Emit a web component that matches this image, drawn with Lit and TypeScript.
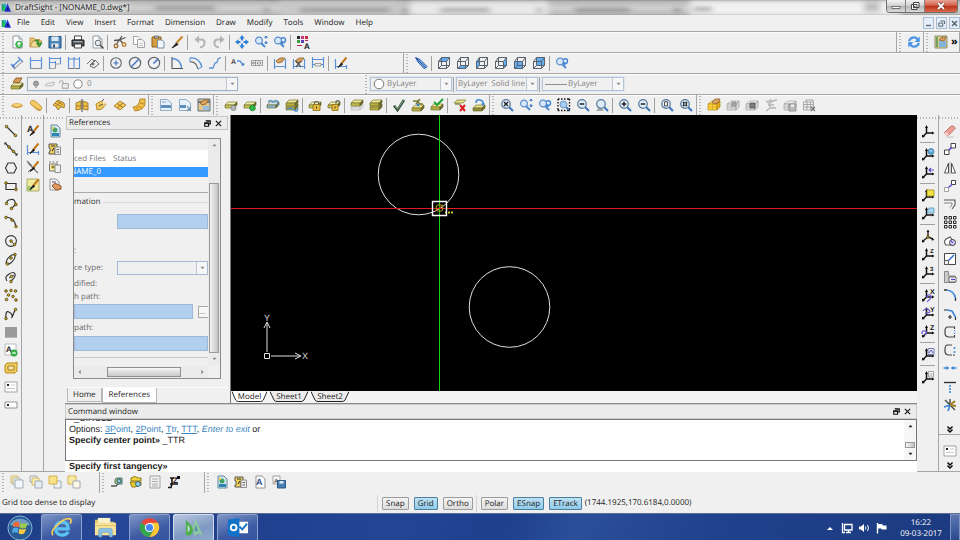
import { LitElement, html, svg, css, nothing } from "lit";
import { customElement, property } from "lit/decorators.js";
import { classMap } from "lit/directives/class-map.js";

/* A mark is a path [d, stroke, fill, width] or a short text {t, x, y, c, s}. */
type PathMark = [string, string?, string?, number?];
type TextMark = { t: string; x: number; y: number; c: string; s: number };
type Mark = PathMark | TextMark;

const dot = (x: number, y: number, r: number) =>
  `M${x - r} ${y}a${r} ${r} 0 1 0 ${2 * r} 0a${r} ${r} 0 1 0 ${-2 * r} 0Z`;
const box = (x: number, y: number, w: number, h: number) => `M${x} ${y}h${w}v${h}h${-w}Z`;
const node = (x: number, y: number): PathMark => [dot(x, y, 1.3), "#4a3c08", "#d8b030", 0.8];
const txt = (t: string, x: number, y: number, c = "#111", s = 7): TextMark => ({ t, x, y, c, s });

const BLUE = "#5b8fd8";
const GREY = "#9a9a9a";

const slab = (top: string, side: string, dy = 0): Mark[] => [
  [`M1 ${7 + dy}L4 ${4 + dy}H13L10 ${7 + dy}Z`, "#77742f", top, 0.7],
  [`M1 ${7 + dy}H10V${10 + dy}H1Z`, "#77742f", side, 0.7],
  [`M10 ${7 + dy}L13 ${4 + dy}V${7 + dy}L10 ${10 + dy}Z`, "#66642a", "#6f6c33", 0.7],
];
const layer = [...slab("#f2eeb0", "#c9c155")];
const layers2: Mark[] = [...slab("#f0eaa0", "#b7ae3e", 2), ...slab("#f0eaa0", "#b7ae3e", -2)];
const lens: Mark[] = [
  ["M9 9L13 13", "#3f78bd", "none", 2.2],
  [dot(6, 6, 4.3), "#5b7898", "#dcebf8", 1.2],
];
const smallLens: Mark[] = [
  ["M7 8L11 12", "#4f88cd", "none", 2],
  [dot(5, 5.5, 3.4), "#5d8fcb", "#d7e8fa", 1.2],
];
const cube = (face: string): Mark[] => [
  [face, "none", "#62aef2"],
  ["M1.5 5.5H9.5V12.5H1.5ZM1.5 5.5L4.5 1.5H12.5L9.5 5.5M12.5 1.5V9.5L9.5 12.5M4.5 1.5V9.5H12.5M4.5 9.5L1.5 12.5", "#59626c", "none", 1],
];
const solid = (c1: string, c2: string): Mark[] => [
  ["M1 6L5 3H13L10 6Z", "#9a9a9a", c1, 0.6],
  ["M1 6H10V12H1Z", "#9a9a9a", c2, 0.6],
  ["M10 6L13 3V9L10 12Z", "#8a8a8a", c2, 0.6],
  ["M5.5 6V12M1 9H10", "#aaa", "none", 0.6],
];
const axes: Mark[] = [
  ["M5.5 3V9H12M5.5 9L2 12.5", "#111", "none", 1.5],
  ["M4 4L5.5 1L7 4ZM11 7.5L13.5 9L11 10.5ZM1 10.5L1 13.5L4 13Z", "none", "#111"],
];
const doc: Mark[] = [
  ["M3 1H9L12 4V13H3Z", "#8b949c", "#fbfcfd", 0.9],
  ["M9 1V4H12", "#8b949c", "#e3e8ec", 0.9],
];
const brush: Mark[] = [
  ["M12.5 1.5L7 8", "#c07818", "none", 2],
  ["M7.5 7L4 11.5L8.5 8.5Z", "#222", "#222", 1],
];
const gold = "#f3c964";
const goldEdge = "#b98322";
const dims: PathMark = ["M1.5 3V13M12.5 3V13M1.5 10.5H12.5", BLUE, "none", 1.2];
const pencilHand: PathMark = ["M3 5L7 2H12L9 6L5 7Z", "#8a5a24", "#d9a360", 0.8];
const sheetSmall: PathMark = ["M7 5H12.5V12.5H7Z", "#777", "#f0f0f0", 0.8];

const ICONS: Record<string, Mark[]> = {
  new: [...doc, [dot(9, 9.5, 3.3), "#2b9a3a", "#4fc15c", 0.8], ["M9 11.5V7.8M7.5 9.2L9 7.5L10.5 9.2", "#fff", "none", 1.1]],
  open: [["M1 12V3H5L6 4.5H11V6H4Z", "#b68b3a", "#e9c67a", 0.8], ["M1 12L4 6H13L10 12Z", "#b68b3a", "#f5dc9c", 0.8], ["M6 6Q9 4 10 9M7.5 8L10.5 11L12.5 7.5", "#3b8f34", "none", 1.8]],
  save: [["M1 1.5H13V13H1Z", "#1f4f80", "#4e87bb", 1], [box(3.5, 1.5, 7, 4.5), "none", "#dbe9f5"], [box(3.5, 8.5, 7, 4), "none", "#e9e9e9"], [box(5, 9.5, 2, 3), "none", "#2b4f77"]],
  print: [[box(3.5, 1, 7, 4), "#333", "#fff", 0.9], ["M1 5H13V11H1Z", "#222", "#4a4f55", 1], [box(3.5, 9, 7, 4), "#333", "#f4f4f4", 0.9], [box(2.5, 6.3, 9, 1), "none", "#c9d0d6"]],
  preview: [...doc, ["M10 10L13.5 13.5", "#444", "none", 1.6], [dot(8, 8, 2.8), "#666", "#e2eef7", 1]],
  cut: [["M1 5.5L6 5L12.5 2.5M3.5 9L9 1M7 5L10 8.5", "#555", "none", 1.3], [dot(3, 11, 1.8), "#9a6a28", "none", 1.3], [dot(11, 9.5, 1.8), "#b87a28", "none", 1.3]],
  copy: [["M1.5 1.5H6L8.5 4V9.5H1.5Z", GREY, "#fff", 0.9], ["M5.5 4.5H10L12.5 7V12.5H5.5Z", GREY, "#f6f6f6", 0.9], ["M7 8.5H11M7 10.5H11", "#bbb", "none", 0.8]],
  paste: [["M1 2H10V12H1Z", "#8a5f20", "#d69c42", 1], [box(3.5, 1, 4, 2.2), "#555", "#bbb", 0.7], ["M6.5 5H11L13 7V13H6.5Z", "#6b86a0", "#f3f7fb", 0.9]],
  painter: [["M12.5 1.5L6 8.5", "#c98a34", "none", 2.2], ["M6.5 8L2 13L8 9.5Z", "#222", "#222", 1]],
  undo: [["M3 4.5H8Q12 4.5 11.5 8.5Q11 12 7 12.5", "#b3b3b3", "none", 2], ["M6 0.5L1.5 4.5L6 8.5Z", "none", "#b3b3b3"]],
  redo: [["M11 4.5H6Q2 4.5 2.5 8.5Q3 12 7 12.5", "#b3b3b3", "none", 2], ["M8 0.5L12.5 4.5L8 8.5Z", "none", "#b3b3b3"]],
  pan: [["M7 0L9.7 3.6H4.3ZM7 14L9.7 10.4H4.3ZM0 7L3.6 4.3V9.7ZM14 7L10.4 4.3V9.7Z", "none", "#2f7fd6"], ["M7 3V5.5M7 8.5V11M3 7H5.5M8.5 7H11", "#2f7fd6", "none", 2]],
  zoomdyn: [...smallLens, ["M12 1V3.5M10.6 2.8L12 1L13.4 2.8M12 9V6M10.6 7L12 9L13.4 7", "#2f6fc6", "none", 1]],
  zoomprev: [...smallLens, ["M8 3.5Q12.5 1.5 12.5 5Q12.5 8 9 7.5", "#3d83d4", "none", 1.5], ["M10 5.5L7.5 7.5L10.5 9.5Z", "none", "#3d83d4"]],
  props: [[box(1, 1, 3, 3), "none", "#2b2b2b"], [box(5, 1, 3, 3), "none", "#c63a7b"], [box(9, 1, 3, 3), "none", "#d6283c"], [box(1, 5, 3, 3), "none", "#36a24a"], [box(5, 5, 3, 3), "none", "#5a3fb2"], ["M1 10.5H6M9 5.5H12", "#b3235a", "none", 1.2], txt("A", 8, 14, "#111", 8)],

  dimAligned: [["M1 8L5 13M8 1L13 6M3.5 9.5L10 3.5", BLUE, "none", 1.3], ["M3 11L4.5 12.5L13 5", "#777", "none", 0.9], ["M2 11L3 8L5 10.5Z", "none", "#3f75c4"]],
  dimLinear: [["M1.5 1V13M12.5 1V13M1.5 4.5H12.5", BLUE, "none", 1.2], ["M1.5 12.5H12.5", "#8b8b8b", "none", 1]],
  dimBase: [["M1.5 1V13M12.5 1V8M7.5 5V12M1.5 2.5H12.5M1.5 6.5H7.5", BLUE, "none", 1.1], ["M2 12.5H7.5V8H12.5", "#999", "none", 0.9]],
  dimCont: [["M1.5 1V13M12.5 1V13M7 1V13M1.5 3H12.5", BLUE, "none", 1.1], ["M1.5 12.5H7M8 12.5H12.5", "#777", "none", 1]],
  dimRot: [["M1 8L6 3L9 6M4 9L8 5", "#777", "none", 1], ["M4 10L9 4L13 8L8 12Z", "#666", "none", 1], [dot(7, 8, 1), "#555", "none", 1]],
  center: [[dot(7, 7, 5.3), "#5d6670", "none", 1.1], ["M4.5 7H9.5M7 4.5V9.5", "#3d72c9", "none", 1.2]],
  diameter: [[dot(7, 7, 5.6), "#5d6670", "none", 1.2], ["M3.5 10.5L10.5 3.5", "#3d72c9", "none", 1.5]],
  radius: [[dot(7, 7, 5.6), "#5d6670", "none", 1.2], ["M6.5 7.5L10.8 3.2", "#3d72c9", "none", 1.6]],
  angle: [["M2 1V12.5H13", "#555", "none", 1.1], ["M2 2.5Q11 3 11.5 12", BLUE, "none", 1.3]],
  arcLen: [["M1 6Q7 5 9 13", "#666", "none", 1.1], ["M1 2Q10 1 13 11", BLUE, "none", 1.4], ["M1 2L1 6M13 11L9 13", BLUE, "none", 1]],
  jog: [["M1 12H5L7 7L9 6.5L10 3L13 1.5", BLUE, "none", 1.3]],
  leader: [txt("A", 0, 8, "#444", 7), ["M6 5H9L12 9", BLUE, "none", 1.3], ["M10 9.5H13.2V6.5Z", "none", "#3f75c4"]],
  tol: [["M1.5 4.5H12.5V9.5H1.5ZM5.5 4.5V9.5M9 4.5V9.5", "#888", "#fff", 0.8], [dot(3.5, 7, 1), "#555", "none", 0.7], ["M7.3 5.8V8.4M10.8 5.8V8.4", "#555", "none", 0.8]],
  dimEdit: [dims, pencilHand],
  dimEditX: [dims, pencilHand, ["M4 5L9 11M9 5L4 11", "#555", "none", 1.2]],
  dimSpace: [["M1.5 1V12M12.5 1V12M1.5 3.5H12.5M1.5 8.5H12.5", BLUE, "none", 1.1], ["M4 7.5H10V10H4Z", "#888", "#eee", 0.8]],
  dimStyle: [["M1.5 3V13M1.5 10.5H12.5M12.5 9V13", BLUE, "none", 1.2], ...brush],

  ray: [["M1.5 1.5L4 6L10.5 13L13 10.5L6 3.5Z", "#2a5cab", "#7fb0ec", 1], ["M2 2L12 12", "#17407f", "none", 0.8]],
  cubeTop: cube("M1.5 5.5L4.5 1.5H12.5L9.5 5.5Z"),
  cubeBottom: cube("M1.5 12.5L4.5 9.5H12.5L9.5 12.5Z"),
  cubeLeft: cube("M1.5 5.5L4.5 1.5V9.5L1.5 12.5Z"),
  cubeRight: cube("M9.5 5.5L12.5 1.5V9.5L9.5 12.5Z"),
  cubeFront: cube("M1.5 5.5H9.5V12.5H1.5Z"),
  cubeBack: cube("M4.5 1.5H12.5V9.5H4.5Z"),

  layerMgr: [...slab("#f2eeb0", "#b9b14b", 2), ["M3 5L6 1H12L9 6Z", "#7d5520", "#d39a58", 0.8]],
  disc: [["M1 7.5Q7 3 13 7.5Q7 12 1 7.5Z", "#d9a850", "#f6cf7a", 0.7], ["M2 8Q7 11 12 8", goldEdge, "none", 0.8]],
  plate: [["M1 5Q2 1 6 3L12 8Q14 11 11 12.5Q9 13 6 10Z", goldEdge, gold, 0.7], ["M1.5 6Q8 12 12 12", "#c99038", "none", 1]],
  fold: [["M1 7L6 2L12 5Q13 7 12 10Q9 7 6 12Q5 8 1 7Z", "#8a6415", "#efbf4c", 0.8], ["M3 5L10 9M5 3L11 7M9 4L4 8", "#8a6415", "none", 0.6]],
  meshBox: [["M1 5L6 3V11L1 12ZM8 3L13 5V12L8 11Z", "#8f6a1a", "#efc04e", 0.8], ["M7 1V14", "#444", "none", 1], ["M1 8H6M8 8H13", "#8f6a1a", "none", 0.7]],
  meshDot: [["M2 6L7 3L12 6L8 11L3 12Z", "#a87c1c", "#f1c75c", 0.8], ["M8 3L10 1M5 8L9 6", "#555", "none", 1], [dot(10, 5, 1.5), "none", "#f9e6b0"]],
  meshTilt: [["M1 8L7 3L13 7L7 12Z", "#9a7018", "#f4c85a", 0.8], ["M4 5.5L10 9.5M4 10L10 5", "#8a6415", "none", 0.8]],
  tube: [["M8 1H13V6Q12 12 3 13L1 9Q7 9 8 1Z", "#b27f1c", "#f2c04a", 0.9], ["M8 5L12 6M6 8L10 10M4 9L6 12", "#a67416", "none", 0.8]],
  sheet1: [["M1.5 1.5H8L12.5 5V12.5H1.5Z", "#8ba5bd", "#e6f0f8", 0.9], ["M2 7H12V10H2Z", "none", "#5e8fbe"], ["M3 4H7", "#7ea2c4", "none", 1]],
  sheet2: [["M1.5 1.5H8L12.5 5V12.5H1.5Z", "#8ba5bd", "#e6f0f8", 0.9], ["M2 7H8V10H2Z", "none", "#5e8fbe"], ["M9 8L13 13M9 13L13 9", "#6c8ca8", "none", 1.2]],
  sheet3: [[box(1, 1, 12, 12), "#5d7080", "#e3c88c", 1], ["M1 4H13", "#4d6a86", "none", 1.6], pencilHand, [box(6, 8, 6, 4), "none", "#9dbde0"]],
  layGrey: [...layer, [dot(9.5, 10, 2.6), "#888", "#b4b4b4", 0.8]],
  layGreen: [...layer, [dot(9.5, 10, 2.8), "#128026", "#2eb845", 0.8]],
  layFreeze: [...slab("#cfe4f4", "#88b5d6"), ["M2 4Q5 1 7 4Q10 1 12 4V8", "#5c93bf", "none", 1.4]],
  layThaw: [...layers2, ["M2 11Q6 9 9 12T13 10", "#4d93c8", "none", 1.6]],
  layLock: [...layer, [box(5, 6.5, 7, 6), "#8a6a15", "#e8bd3c", 0.8], ["M6.5 6.5V4.5Q8.5 2.5 10.5 4.5V6.5", "#666", "none", 1.1], [box(8, 8.5, 1, 2), "none", "#333"]],
  layUnlock: [...layer, [box(5, 6.5, 6, 6), "#8a6a15", "#e8bd3c", 0.8], ["M9 6V3.5Q11 1.5 13 4", "#666", "none", 1.1], [box(7.5, 8.5, 1, 2), "none", "#333"]],
  layIso: [["M1 9H10V12H1ZM10 9L13 6V9L10 12", "#b4b4b4", "#e2e2e2", 0.7], ...slab("#efe99a", "#c0b846", -2)],
  layAll: layers2,
  check: [["M2 7.5L5.5 12L12 2", "#35523c", "none", 2.6], ["M2.5 7.5L5.5 11L11.5 2.5", "#86a98d", "none", 1]],
  layWalk: [...slab("#efe99a", "#b7ae3e", 3), ["M2 3H6L9 6H12M9 1L5 6", "#7c7735", "none", 1.6], [dot(7, 7, 1.4), "none", "#3f86d0"]],
  layCheck: [...slab("#efe99a", "#b7ae3e", 2), ["M4 4L7 7L13 1", "#19a52f", "none", 1.9]],
  layDel: [["M1 5L4 2H13L10 5Z", "#77742f", "#e9e28a", 0.7], ["M2 6H7", "#77742f", "none", 1.2], ["M7 7L12 13M12 7L7 13", "#d81e1e", "none", 2]],
  layPrev: [...slab("#e9e28a", "#8f8838", 3), ["M4 5Q4 1 8 2T11 6", "#3f86d0", "none", 1.6], ["M9 5.5H13L11 8Z", "none", "#3f86d0"]],
  zoomX: [...lens, ["M4 4L8 8M8 4L4 8", "#222", "none", 1.4]],
  zoomWin: [["M1 1H2.5M4 1H5.5M7 1H8.5M10 1H12.5M12.5 1V2.5M12.5 4V5.5M12.5 7V8.5M12.5 10V12.5M1 1V2.5M1 4V5.5M1 7V8.5M1 10V12.5M1 12.5H2.5M4 12.5H5.5M7 12.5H8.5M10 12.5H12.5", "#111", "none", 1.4], ["M8.5 8.5L12 12", "#3f78bd", "none", 2], [dot(6.5, 6.5, 3.5), "#6c98c8", "#a9cdf0", 1]],
  zoomMinus: [...lens, ["M3.8 6H8.2", "#222", "none", 1.5]],
  zoomPlus: [...lens, ["M3.8 6H8.2M6 3.8V8.2", "#222", "none", 1.5]],
  zoomCen: [["M1 13L5 8L9 13Z", "none", "#a8a8a8"], ...lens],
  zoomDoc: [...lens, ["M4.6 3.8H7.4V8H4.6Z", "#333", "#fff", 0.9]],
  zoomFit: [...lens, ["M4 4H5.4V5.4H4ZM6.6 4H8V5.4H6.6ZM4 6.6H5.4V8H4ZM6.6 6.6H8V8H6.6Z", "#111", "#111", 0.4]],
  blockGold: [["M1 6L5 3H13L10 6Z", "#b58a14", "#ffe57a", 0.7], ["M1 6H10V12H1Z", "#b58a14", "#ffd23e", 0.7], ["M10 6L13 3V9L10 12Z", "#a57a10", "#e8ae20", 0.7], ["M5.5 6V12M1 9H10", "#c89c28", "none", 0.6], ["M5 4L8 1H13L11 5L7 6Z", "#875820", "#dca468", 0.7]],
  blockA: [...solid("#eee", "#dadada"), ["M6 4H10V8H6Z", "#888", "#a6a6a6", 0.8]],
  blockB: [...solid("#eee", "#dadada"), ["M5 5H10V10H5Z", "#555", "#7c7c7c", 0.8]],
  blockC: [["M2 4L13 2M6 1V10L2 13M6 10H12M4 7H10", "#b4b4b4", "none", 1.3], ["M2 2L5 6L10 3", "#c4c4c4", "none", 1.2]],
  blockSave: [...solid("#ececec", "#dcdcdc"), [box(6, 6, 7, 7), "#8d8d8d", "#b9b9b9", 0.9], [box(8, 6.5, 3, 2.4), "none", "#f0f0f0"]],
  blockTab: [["M1.5 4H11.5V12H1.5ZM1.5 6.5H11.5M1.5 9H11.5M5 4V12M8.5 4V12", "#999", "#eee", 0.8], ["M4 4V2H11V4", "#999", "none", 0.9], ["M9 9L13 13M13 9L9 13", "#777", "none", 1.2]],
  refresh: [["M2 6Q4 1.5 8.5 2.5L11 4.5M12 8Q10 12.5 5.5 11.5L3 9.5", "#4d97e6", "none", 2.3], ["M12.8 1.5V7H7.5ZM1.2 12.5V7H6.5Z", "none", "#4d97e6"]],
  palette: [[box(1, 1, 12, 12), "#8d8f70", "#d8cf8b", 1], [box(5, 6, 7, 6), "none", "#86b3dc"], ["M5 5L8 2H12L10 6Z", "#8a5a24", "#d59a62", 0.7], ["M3 2V12", "#4e8a4c", "none", 1.4]],

  line: [["M3 3L11 11", "#333", "none", 1.1], node(2.5, 2.5), node(11.5, 11.5)],
  iline: [["M1 1L13 13", "#333", "none", 1.1], node(5, 5), node(9.5, 9.5), ["M0.5 0.5H3L0.5 3ZM13.5 13.5H11L13.5 11Z", "none", "#222"]],
  polygon: [["M4 2H10L12.5 7L10 12H4L1.5 7Z", "#333", "none", 1.1]],
  rect: [["M2 4.5H12V10.5H2Z", "#333", "none", 1.2], node(2, 4), node(12, 10.5)],
  arc3: [["M3 7Q2 3 7 2.5T11 8L7 12", "#333", "none", 1.2], node(2.5, 6.5), node(12, 7.5), node(7.5, 11.5)],
  arc: [["M2 2Q11 3 12 12", "#333", "none", 1.2], node(2, 2.5), node(8, 5), node(12, 11.5)],
  circle: [[dot(7, 7, 5.4), "#333", "none", 1.1], ["M7 7L10 10", "#333", "none", 0.8], node(7, 7), node(10.5, 10.5)],
  ellipse: [["M2 11Q3 4 11 2Q12 8 5 12Z", "#333", "none", 1.1], node(7, 6), node(11, 2.5), node(3.5, 12)],
  ellArc: [["M3 11Q0 7 5 4T11 4T7 11", "#333", "none", 1.2], ["M5 8L10 5", "#333", "none", 0.9], node(7.5, 6.5), node(7, 11.5)],
  points: [node(2, 3), node(7, 2.5), node(4.5, 7), node(11.5, 3), node(9, 8.5), node(2.5, 11.5), node(12, 12)],
  spline: [["M2 12Q1 3 5 5T8 10T11 3", "#333", "none", 1.2], node(2, 11.5), node(11.5, 2.5)],
  hatch: [[box(1, 2, 12, 11), "none", "#dcdcdc"], ["M1 3H13M1 5H13M1 7H13M1 9H13M1 11H13M2 2V13M4 2V13M6 2V13M8 2V13M10 2V13M12 2V13", "#777", "none", 0.8]],
  note: [[box(1, 1, 11, 11), "#aaa", "#fff", 0.8], txt("A", 2, 9, "#222", 8), [dot(10, 10, 3.2), "#1d8a30", "#38b54c", 0.6], ["M8.3 10H11.7", "#fff", "none", 1.3]],
  cloud: [["M3 2H11L13 1V10L11 12H2L1 11V4Z", "#b68a22", "#f0cc58", 1], [box(4, 5, 6, 4), "#8a6a1a", "#f7e5a8", 0.8]],
  tableA: [[box(1, 2, 12, 10), "#9a9a9a", "#fff", 0.9], [box(3, 4, 2, 2), "none", "#222"], ["M3 8.5H11M7 5H11", "#bbb", "none", 0.8]],
  tableB: [[box(1, 4, 12, 6), "#888", "#fff", 0.9], [box(3, 6, 2, 2), "none", "#222"]],
  textStyle: [txt("A", 1, 8, "#222", 9), ...brush],
  lineStyle: [["M2 3L12 13M1 1L6 6", "#777", "none", 1.2], ["M2 12L5 9", "#777", "none", 1], ...brush],
  fillStyle: [[box(1, 1, 12, 12), "#9a9a55", "#f0e9a0", 0.8], [box(1, 8, 5, 5), "none", "#a7c66c"], ...brush],
  refDoc: [["M3 1H9L12 4V13H3Z", "#568090", "#d6eaf2", 0.9], [dot(7, 6, 2.5), "none", "#46a06a"], [box(4, 9, 7, 3), "none", "#2e84b4"], [box(4, 3, 2, 2), "none", "#e8c640"]],
  refBlock: [["M1 2H9V6H7V12H1V10H2V6H1Z", "#555", "#f3d35a", 1], ["M3 4H7M4 9L6 6", "#333", "none", 1.1], sheetSmall, ["M8.5 7.5H11M8.5 10H11", "#444", "none", 0.9]],
  refDash: [[box(1.5, 4, 8, 7), "#777", "#f4eaa0", 1], ["M1 2H3M4.5 2H6.5M8 2H10", "#777", "none", 1], sheetSmall, [dot(5, 7, 1.6), "none", "#8a7b20"]],
  refHand: [["M2 1H8L11 4V12H2Z", "#888", "#f4f4f4", 0.9], ["M4 8Q6 4 9 6L13 8V11L8 12Z", "#8a4c1c", "#e09a60", 0.9], ["M4 4H8", "#557", "none", 1]],

  ucs: axes,
  ucsWorld: [...axes, [dot(10, 4.5, 2.9), "#2d6a9a", "#5aa7dc", 0.7], ["M8.5 3.5Q10 5 11.5 3.5", "#d6ecfa", "none", 0.9]],
  ucsPrev: [...axes, ["M8 5H13M10 3L8 5L10 7", "#5a4fd0", "none", 1.2]],
  ucsFace: [...axes, ["M6 2H13V8H6Z", "#9c8a14", "#f6e34a", 0.8]],
  ucsView: [...axes, ["M8 2H13V7H6Z", "#5c96b8", "#a9d8f0", 0.8]],
  ucsOrigin: [["M7 3V8L12 10M7 8L2 12", "#222", "none", 1.4], ["M5.5 3L7 0.5L8.5 3ZM11 9L13.5 11L10.5 11.5ZM1 10.5V13.5L4 13Z", "none", "#111"], node(7, 8)],
  ucsZ: [...axes, txt("Z", 9, 6, "#111", 6)],
  ucs3: [...axes, txt("3", 9, 6, "#111", 6)],
  rotX: [...axes, txt("X", 9, 6, "#111", 7), ["M6 10Q6 6 9 7T8 12T10 10", "#6a5fd8", "none", 1.2]],
  rotY: [...axes, txt("Y", 9, 6, "#111", 7), ["M2 5Q5 1 8 4T4 7", "#6a5fd8", "none", 1.2]],
  rotZ: [...axes, txt("Z", 9, 6, "#111", 7), ["M1 10Q1 6 4 7T4 11", "#6a5fd8", "none", 1.3]],
  ucsNamed: [...axes, [box(7, 1.5, 6, 6), "#6a70b0", "#e6e8fa", 0.9], ["M8 6L10 3L12 6", "#4a50a0", "none", 0.9]],
  ucsApply: [...axes, [box(7.5, 1.5, 5, 5.5), "#999", "#fff", 0.9], [box(9, 3.5, 2, 2), "#aaa", "none", 0.7]],

  erase: [["M1 9L8 2Q10 1 12.5 4L6 11Q3 12 1 9Z", "#b06a60", "#ee9d94", 0.8], ["M1 9Q2 12 6 11L4 8Z", "none", "#f8d0cc"], ["M3 13H11", "#b8b8b8", "none", 0.8]],
  move: [[box(8, 1.5, 4.5, 4.5), "#444", "#fff", 1], [box(1.5, 8, 4.5, 4.5), "#444", "#fff", 1], ["M6 8L8.5 5.5", "#4a3fd8", "none", 1.6]],
  mirror: [["M5.5 2V12H1.5ZM8.5 2V12H12.5Z", "#555", "#fff", 1], ["M7 0.5V13.5", "#888", "none", 0.6]],
  copyEnt: [[box(8.5, 1.5, 4, 4), "#444", "#fff", 1], [box(1.5, 8.5, 4, 4), "#999", "#fff", 0.9], ["M5.5 8.5L9 5.5", "#5a4fe0", "none", 1.6]],
  offset: [["M1 3H12V8L9 12", "#555", "none", 1.1], ["M1 6H9V8L7 10.5", "#888", "none", 1]],
  pattern: [["M1.5 1.5H4V4H1.5ZM6 1.5H8.5V4H6ZM10.5 1.5H13V4H10.5ZM1.5 6H4V8.5H1.5ZM6 6H8.5V8.5H6ZM10.5 6H13V8.5H10.5ZM1.5 10.5H4V13H1.5ZM6 10.5H8.5V13H6ZM10.5 10.5H13V13H10.5Z", "#222", "#fff", 1]],
  rotate: [["M3 5L7 3L11 8L8 11H3Q0 8 3 5Z", "#555", "#fff", 1.1], [dot(9.5, 8.5, 3), "#333", "#dcd8f8", 1], ["M8 7L10 9", "#5a4fe0", "none", 1.3]],
  scale: [[box(1.5, 1.5, 11, 11), "#444", "#fff", 1], ["M4 10L11 3", "#2f6fd6", "none", 1.4], [box(1.5, 8.5, 4, 4), "#555", "#eee", 0.9]],
  stretch: [["M1.5 1.5H5.5V6H12V12.5H1.5Z", "#888", "#ccc", 1], [box(6, 7, 7, 5), "#555", "#fff", 0.9], ["M8 9.5H12", "#4a3fd8", "none", 1.3]],
  fillet: [["M1 2H4M12.5 10V13", "#333", "none", 1.3], ["M4 2Q11 3 12.5 10", "#3b86dd", "none", 1.6]],
  chamfer: [["M1 3H4M12.5 10V13M5 10H9M7 8V12", "#333", "none", 1.2], ["M4 3L9 4L12.5 10", "#3b86dd", "none", 1.5]],
  split: [["M11.5 4V2H5Q2 2 2 6V8Q2 12 6 12H11.5V10", "#444", "none", 1.2], ["M11.5 5.5V6.5M11.5 8V9", "#3b86dd", "none", 1.4]],
  splitP: [["M9 2H5Q2 2 2 6V8Q2 12 6 12H9", "#444", "none", 1.2], [dot(11.5, 5, 1), "none", "#3b86dd"], [dot(11.5, 9, 1), "none", "#3b86dd"], ["M10 12H12", "#444", "none", 1.2]],
  weld: [["M0.5 7H5.5M8.5 7H13.5", "#3b86dd", "none", 1.3], ["M3.5 4.8L6 7L3.5 9.2ZM10.5 4.8L8 7L10.5 9.2Z", "none", "#3b86dd"]],
  trim: [["M1 2.5H13", "#333", "none", 1.4], ["M7 5V7M7 8V10M7 11V13", "#3b86dd", "none", 1.6]],
  explode: [["M7 7L2 2M7 7L12 12M7 7L7 1", "#444", "none", 1.4], ["M7 7L1 9M7 7L5 13", "#3b86dd", "none", 1.7], ["M7 7L12 3M7 7L13 8", "#a07c24", "none", 2]],

  front1: [[box(1, 1, 7, 7), "#cdb65c", "#fbeeb4", 0.9], [box(3, 3, 7, 7), "#a9b4bf", "#eef2d8", 0.9], [box(5, 5, 8, 8), "#97a3b0", "#f4f7fa", 0.9]],
  front2: [[box(1, 1, 7, 6), "#97a3b0", "#eef2f6", 0.9], [box(3, 3, 7, 7), "#cdb65c", "#fbeeb4", 0.9], [box(6, 6, 7, 7), "#97a3b0", "#e6edf4", 0.9]],
  front3: [[box(6, 6, 7, 7), "#97a3b0", "#eef2f6", 0.9], [box(1, 1, 8, 8), "#cdab3c", "#fbe28a", 0.9]],
  front4: [[box(1, 1, 8, 8), "#cdab3c", "#fbe9a8", 0.9], [box(6, 6, 7, 7), "#97a3b0", "#fbf8e8", 0.9]],
  tape: [["M1 11H6L9 8", "#555", "none", 1.3], ["M5 5Q5 3 8 3H12V9H7Q5 9 5 7Z", "#3a7080", "#c9c84a", 1], [dot(9, 6, 2), "#28648a", "#8ec2e0", 1]],
  tape2: [["M2 3Q6 0 9 3H12V6H2Z", "#8d7a14", "#f0d43c", 1], ["M1 7H12V10L6 12H3Z", "#8d7a14", "#e8cc34", 1], [dot(9, 9, 2.4), "#28648a", "#9cd0ea", 1]],
  listDoc: [["M2 1H12V13H2Z", "#999", "#f2f2f2", 0.9], ["M4 4H10M4 6.5H10M4 9H10M4 11H10", "#999", "none", 0.8]],
  coord: [["M1 12.5H4L5 9V3M3 9H11M3 3H7", "#111", "none", 1.6], txt("Z", 6, 8, "#111", 8), [box(10, 1, 3, 3), "none", "#111"]],
  aDoc: [["M3 1H9L12 4V13H3Z", "#888", "#fff", 0.9], txt("A", 3, 10, "#334f8a", 9)],
  saveA: [["M1 1H8V9H1Z", "#999", "#f7f7f7", 0.9], txt("A", 2, 8, "#555", 6), [box(5.5, 5.5, 8, 7.5), "#1f4f80", "#4a7fb5", 0.9], [box(7.5, 6, 4, 2.6), "none", "#dbe9f5"]],

  bulb: [[dot(7, 6.5, 3), "#888", "#9f9f9f", 1], [box(5.8, 10, 2.4, 1.8), "none", "#aaa"]],
  sun: [["M2 9Q1 6 6 6L12 5Q13 8 9 9Z", "#aaa", "#f4f4f4", 1]],
  lock: [[box(5, 6.5, 7, 5.5), "#999", "#eaeaea", 1], ["M2 6V4Q4 1.5 6 4V6.5", "#999", "none", 1]],
  ring: [[dot(7, 7, 4.8), "#777", "#fff", 1]],
  app: [["M1 2L7 2V12H1Z", "none", "#25b8b0"], ["M2 11V3L7 11Z", "#0f8a3a", "#2fd05a", 0.8], ["M9 1L14 13H5Z", "none", "#2430d8"], ["M9.5 6L7 11H12Z", "none", "#111a80"]],
};

@customElement("ds-icon")
export class DsIcon extends LitElement {
  static styles = css`
    :host { display: inline-flex; width: 14px; height: 14px; }
    svg { display: block; width: 100%; height: 100%; overflow: visible; }
    text { font-family: "Liberation Sans", sans-serif; font-weight: bold; }
  `;
  @property() name = "";
  render() {
    return html`<svg viewBox="0 0 14 14" aria-hidden="true">
      ${(ICONS[this.name] ?? []).map((m) =>
        Array.isArray(m)
          ? svg`<path d=${m[0]} stroke=${m[1] ?? "none"} fill=${m[2] ?? "none"} stroke-width=${m[3] ?? 1}></path>`
          : svg`<text x=${m.x} y=${m.y} fill=${m.c} font-size=${m.s}>${m.t}</text>`
      )}
    </svg>`;
  }
}

/* Space separated icon names; "|" is a separator. */
const tools = (names: string) =>
  names.split(" ").map((n) =>
    n === "|"
      ? html`<span class="sep" role="separator"></span>`
      : html`<button class="tool" aria-label=${n}><ds-icon name=${n}></ds-icon></button>`
  );

const arrow = (d: string) => html`<svg class="arrow" viewBox="0 0 6 6" aria-hidden="true"><path d=${d}></path></svg>`;
const UP = "M0 5L3 1L6 5Z";
const DOWN = "M0 1L3 5L6 1Z";
const LEFT = "M5 0L1 3L5 6Z";
const RIGHT = "M1 0L5 3L1 6Z";

const dockButtons = html`
  <button class="dock-btn" aria-label="Float"><svg viewBox="0 0 8 8"><path d="M2.5 1V0.8H7.2V4.5H5.5M0.8 3.2H5.2V7.2H0.8Z M0.8 3.8H5.2M2.5 1.4H7.2"></path></svg></button>
  <button class="dock-btn" aria-label="Close"><svg viewBox="0 0 8 8"><path d="M1 1L7 7M7 1L1 7"></path></svg></button>`;

@customElement("app-root")
export class AppRoot extends LitElement {
  static styles = css`
    :host {
      display: flex; flex-direction: column; min-height: 100vh; overflow: hidden;
      background: #f0f0f0; color: #1a1a1a;
      font: 8px/12px "Open Sans", "Noto Sans", sans-serif;
      text-rendering: geometricPrecision;
    }
    * { box-sizing: border-box; }
    button, input, select { font: inherit; color: inherit; margin: 0; padding: 0; border: 0; background: none; text-rendering: inherit; }
    svg { display: block; }
    a { color: #3a86c0; text-decoration: none; }

    .title {
      position: relative; display: flex; align-items: center; height: 15px; padding-left: 1px; gap: 4px;
      background: linear-gradient(#8e8e8e, #b9b9b9 12%, #cfcfcf 50%, #bdbdbd 92%, #9a9a9a);
    }
    .title ds-icon, .menu ds-icon { width: 10px; height: 11px; }
    .title-text { position: relative; flex: 1; text-shadow: 0 0 4px #fff, 0 0 4px #fff; color: #111; }
    .glass { position: absolute; inset: 0; width: 100%; height: 100%; }
    .winctl { position: relative; display: flex; align-self: flex-start; height: 13px; margin-right: 2px; border: 1px solid #6f6f6f; border-top: 0; border-radius: 0 0 4px 4px; overflow: hidden; }
    .winctl button { display: grid; place-items: center; width: 19px; border-right: 1px solid #808080; background: linear-gradient(#f2f2f2, #d4d4d4 45%, #b4b4b4 50%, #d9d9d9); }
    .winctl .close { width: 32px; border: 0; background: linear-gradient(#e8a394, #d3604a 45%, #b8301a 50%, #dc6a4a); }
    .winctl svg { width: 10px; height: 8px; }

    .menu { display: flex; align-items: center; height: 16px; padding-left: 1px; }
    .menu nav { display: flex; flex: 1; gap: 11px; padding-left: 6px; }
    .mdi { display: flex; gap: 2px; }
    .mdi button { display: grid; place-items: center; width: 11px; height: 12px; border: 1px solid #a9bed2; background: #e3eefa; }
    .mdi svg { width: 7px; height: 7px; fill: none; stroke: #5c6670; }

    .bar { display: flex; height: 21px; border-top: 1px solid #a6a6a6; box-shadow: inset 0 1px #fbfbfb; }
    .section { display: flex; align-items: center; padding-left: 7px; padding-right: 1px; border-right: 1px solid #a6a6a6;
      background: radial-gradient(circle, #b4b4b4 45%, transparent 50%) 2px 3px / 2px 3px repeat-y; }
    .section.last { border-right: 0; flex: 1; }
    .grow { flex: 1; }
    .to-views { width: 404px; }
    .to-format { width: 363px; border: 0; }
    .order { width: 100px; }
    .inquiry { width: 105px; }
    .slim { padding-right: 0; }
    .tool { display: grid; place-items: center; flex: none; width: 19px; height: 18px; }
    .sep { flex: none; width: 4px; height: 15px; background: linear-gradient(#a0a0a0, #a0a0a0) 1px 0 / 1px 100% no-repeat; }
    .more { font-size: 11px; font-weight: bold; color: #000; line-height: 12px; width: 9px; }

    .combo { display: flex; align-items: center; height: 14px; border: 1px solid #b4c4d8; background: #f0f0f0; color: #858585; }
    .combo.outlined { box-shadow: 0 0 0 1px #dfe7ef; }
    .combo select { flex: 1; min-width: 0; appearance: none; padding-left: 1px; }
    .combo .drop { display: grid; place-items: center; width: 11px; height: 12px; border-left: 1px solid #bcc6d0; background: #f6f6f6; }
    .combo ds-icon { margin-left: 1px; }
    .layer-combo { width: 211px; margin-left: 1px; border-color: #9fb2c6; }
    .layer-combo ds-icon { width: 12px; height: 12px; margin-left: 2px; }
    .layer-combo select { padding-left: 3px; }
    .prop-combo { width: 82px; }
    .right-text { padding-right: 1px; }
    .rule { width: 22px; height: 1px; margin-left: 2px; background: #8c8c8c; }
    .arrow { width: 5px; height: 4px; fill: #8c8c8c; }

    .middle { display: flex; flex: 1; }
    .rail { display: flex; flex-direction: column; align-items: center; width: 22px; padding-top: 7px; border-right: 1px solid #a6a6a6; border-bottom: 1px solid #a6a6a6;
      background: radial-gradient(circle, #b4b4b4 45%, transparent 50%) 2px 2px / 3px 2px repeat-x; }
    .rail .tool { width: 20px; }
    .spread { display: flex; flex-direction: column; justify-content: space-between; height: 292px; }
    .rail .sep { width: 15px; height: 5px; background: linear-gradient(#a0a0a0, #a0a0a0) 0 2px / 100% 1px no-repeat; }
    .rail.end { border-right: 0; width: 21px; flex: none; }
    .rail.edit { border-left: 1px solid #a6a6a6; width: 22px; }
    .chev { display: grid; place-items: center; width: 12px; height: 10px; }
    .chev svg { width: 6px; height: 7px; fill: none; stroke: #000; stroke-width: 1.4; }
    .edit .chev { margin-top: 10px; }
    .rail-next { width: 100%; padding-top: 7px; border-top: 1px solid #a6a6a6; display: flex; flex-direction: column; align-items: center; }
    .rail-next .chev { margin-top: 0; }

    .main { display: flex; flex-direction: column; flex: 1; min-width: 0; }
    .upper { display: flex; flex: 1; }
    .dock { display: flex; flex-direction: column; width: 166px; padding: 1px 2px 0 1px; border-right: 1px solid #777; }
    .dock-head { display: flex; align-items: center; height: 14px; padding: 0 3px 0 2px; border: 1px solid #c4c4c4; background: #ececec; }
    .dock-head h2 { flex: 1; margin: 0; font: inherit; }
    .dock-btn { width: 11px; height: 11px; display: grid; place-items: center; }
    .dock-btn svg { width: 7px; height: 7px; fill: none; stroke: #111; stroke-width: 1.3; }

    .frame { display: grid; grid-template-columns: 1fr 12px; margin: 8px 7px 0; border: 1px solid #8a8a8a; color: #6a6a6a; }
    .view { overflow: hidden; min-width: 0; padding-top: 11px; }
    .files { width: 100%; border-collapse: collapse; table-layout: fixed; }
    .files th { height: 17px; padding: 0; font-weight: normal; text-align: left; background: #fff; color: #777; }
    .files td { height: 10px; padding: 0; line-height: 10px; background: #3399ff; color: #fff; }
    .files .file { width: 39px; }
    .cut { display: flex; overflow: hidden; }
    .files td .cut { width: 27px; justify-content: flex-end; }
    .group { height: 16px; border-bottom: 1px solid #a9a9a9; }
    .legend { display: flex; align-items: center; gap: 3px; height: 18px; color: #333; }
    .legend::after { content: ""; flex: 1; height: 1px; background: #dcdcdc; }
    .row { display: flex; align-items: center; }
    .row label { width: 43px; white-space: nowrap; flex: none; }
    .blue { flex: 1; min-width: 0; height: 15px; border: 1px solid #9fb9d4; background: #b1cfee; }
    .r-name { height: 20px; }
    .r-colon { height: 26px; align-items: flex-end; }
    .r-type { height: 21px; }
    .r-type .combo { flex: 1; border-color: #a4bad2; }
    .r-mod { height: 12px; }
    .r-label { height: 14px; }
    .r-path { gap: 5px; }
    .browse { width: 10px; height: 12px; border: 1px solid #a8a8a8; border-right: 0; background: #f7f7f7; line-height: 8px; text-align: left; }
    .r-save { height: 17px; }
    .tail { height: 7px; margin-bottom: 8px; border-bottom: 1px solid #ccc; }
    .vbar { display: flex; flex-direction: column; align-items: center; padding-bottom: 1px; background: #ebebeb; }
    .vbar .arrow, .hbar .arrow { flex: none; margin: 4px 0; }
    .vbar .gap { flex: 32; }
    .vthumb { flex: 170; width: 10px; border: 1px solid #9a9a9a; background: linear-gradient(90deg, #f4f4f4, #dcdcdc 50%, #c2c2c2); }
    .hbar { grid-column: 1; display: flex; align-items: center; justify-content: space-between; height: 12px; padding: 0 3px; background: #ebebeb; }
    .hthumb { width: 74px; height: 10px; margin-left: 6px; border: 1px solid #8f8f8f; background: linear-gradient(#f8f8f8, #dedede 50%, #cbcbcb); }
    .dtabs { display: flex; align-items: flex-start; margin-top: 8px; padding-left: 1px; border-top: 1px solid #fafafa; }
    .dtabs button { height: 14px; padding: 0 5px; border: 1px solid #b8b8b8; border-top: 0; }
    .dtabs .on { height: 15px; padding: 0 6px; background: #fff; }

    .drawing { display: flex; flex-direction: column; flex: 1; min-width: 0; }
    .canvas { flex: 1; min-height: 276px; width: 100%; background: #000; }
    .canvas text { font: 9px "Liberation Sans", sans-serif; fill: #d8d8d8; }
    .sheets { display: flex; gap: 3px; height: 12px; padding-left: 1px; background: #f4f4f4; }
    .sheet { position: relative; width: 38px; height: 11px; line-height: 11px; }
    .sheet svg { position: absolute; inset: 0; width: 100%; height: 100%; fill: #ececec; stroke: #222; }
    .sheet.on { width: 35px; }
    .sheet.on svg { fill: #fff; }
    .sheet span { position: relative; }

    .command { border-top: 1px solid #8a8a8a; font-family: "Liberation Sans", Arial, sans-serif; }
    .command .dock-head { height: 15px; border-color: #ccc; font-family: "Open Sans", "Noto Sans", sans-serif; }
    .history { display: flex; height: 42px; border: 1px solid #777; background: #fff; font-size: 9px; line-height: 11px; }
    .log { flex: 1; padding-left: 3px; overflow: hidden; }
    .log p { margin: 0; }
    .log .old { height: 4px; display: flex; align-items: flex-end; overflow: hidden; padding-left: 5px; }
    .history .vbar { width: 12px; padding: 0; background: #f6f6f6; }
    .history .arrow { fill: #222; margin: 4px 0; }
    .history .vthumb { flex: none; height: 6px; margin-top: 6px; }
    .history .vbar .gap { flex: 1; }
    .prompt { display: flex; height: 11px; padding-left: 4px; background: #fff; font-size: 9px; font-weight: bold; line-height: 11px; }
    .prompt input { flex: 1; min-width: 0; outline: 0; }

    .lower { display: flex; height: 21px; }
    .lower .section { padding-right: 0; padding-bottom: 2px; }
    .status { display: flex; align-items: center; height: 20px; padding-left: 2px; }
    .msg { width: 375px; }
    .toggles { display: flex; align-items: center; gap: 5px; height: 17px; padding: 0 3px 0 4px; border-left: 1px solid #d4d4d4; }
    .toggles button { height: 13px; padding: 0 3px; border: 1px solid #9c9c9c; border-radius: 1px; background: linear-gradient(#f4f4f4, #dcdcdc); line-height: 11px; }
    .toggles .on { border-color: #4d7f9f; background: linear-gradient(#bfe2f4, #8fcbea); }

    .taskbar { display: flex; align-items: stretch; height: 28px; padding-left: 3px; border-top: 1px solid #5b6f94; color: #fff;
      background: linear-gradient(115deg, #1c3a80, #27489a 12%, #1f3f8c 20%, #234594 42%, #1d3f8c 52%, #2c4f9a 60%, #20418c 75%, #1b3a80); }
    .task { display: grid; place-items: center; width: 41px; margin-right: 3px; border: 1px solid transparent; border-radius: 2px; }
    .task svg { width: 23px; height: 23px; }
    .task.run { border-color: #8ea2cd; background: linear-gradient(160deg, #7f95c6, #3e5ca4 60%, #3454a0); }
    .task.front { border-color: #d3dcf0; background: linear-gradient(160deg, #b9c7e0, #7f9ac2 60%, #8fa9cf); }
    .start { width: 33px; margin-right: 5px; border: 0; }
    .start svg { width: 26px; height: 26px; }
    .tray { display: flex; align-items: center; gap: 5px; margin-left: auto; }
    .tray svg { width: 12px; height: 12px; }
    .clock { width: 58px; text-align: center; line-height: 11px; }
    .peek { width: 10px; border: 1px solid #7f94c2; background: linear-gradient(#5c76b0, #2a4a8f); }
  `;

  private titleBar() {
    return html`<header class="title">
      <svg class="glass" viewBox="0 0 960 15" preserveAspectRatio="none" aria-hidden="true">
        <defs><filter id="soft" x="-20%" y="-60%" width="140%" height="220%"><feGaussianBlur stdDeviation="3 2"></feGaussianBlur></filter></defs>
        <g filter="url(#soft)">
          <path d="M410 2H548V15H410Z" fill="#e9e9e9"></path>
          <path d="M280 2H400V15H280Z" fill="#c8c8c8"></path>
          <path d="M690 1H900V15H690Z" fill="#f2f2f2"></path>
          <path d="M155 8H215M300 10H390M440 10H490M575 10H630M693 9H712" stroke="#858585" stroke-width="3" fill="none"></path>
          <path d="M265 10H268M403 10H407M537 10H541M675 10H679" stroke="#6f6f6f" stroke-width="4" fill="none"></path>
          <path d="M864 2H880V12H864Z" fill="#c0c0c0"></path>
        </g>
      </svg>
      <ds-icon name="app"></ds-icon>
      <span class="title-text">DraftSight - [NONAME_0.dwg*]</span>
      <div class="winctl">
        <button aria-label="Minimize"><svg viewBox="0 0 10 8"><path d="M1 4.5H9V6.5H1Z" fill="#fff" stroke="#555" stroke-width=".8"></path></svg></button>
        <button aria-label="Restore"><svg viewBox="0 0 10 8"><path d="M3.5 .5H9V5.5H3.5ZM1.5 2.5H7V7.5H1.5ZM3.5 4.3H5V5.8H3.5Z" fill="#fff" stroke="#444" stroke-width="1"></path></svg></button>
        <button class="close" aria-label="Close"><svg viewBox="0 0 10 8"><path d="M2 1L8 7M8 1L2 7" stroke="#5a2a22" stroke-width="3"></path><path d="M2 1L8 7M8 1L2 7" stroke="#fff" stroke-width="1.8"></path></svg></button>
      </div>
    </header>`;
  }

  private menuBar() {
    const items = ["File", "Edit", "View", "Insert", "Format", "Dimension", "Draw", "Modify", "Tools", "Window", "Help"];
    return html`<div class="menu">
      <ds-icon name="app"></ds-icon>
      <nav>${items.map((t) => html`<button>${t}</button>`)}</nav>
      <div class="mdi">
        <button aria-label="Minimize document"><svg viewBox="0 0 7 7"><path d="M1 5.5H6" stroke-width="1.4"></path></svg></button>
        <button aria-label="Restore document"><svg viewBox="0 0 7 7"><path d="M2.5 1H6.5V4M.8 3H4.8V6.2H.8Z"></path></svg></button>
        <button aria-label="Close document"><svg viewBox="0 0 7 7"><path d="M1 1L6 6M6 1L1 6" stroke-width="1.6"></path></svg></button>
      </div>
    </div>`;
  }

  private combo(cls: string, label: string, value: string, lead: unknown = nothing, trail: unknown = nothing) {
    return html`<div class="combo outlined ${cls}">${lead}
      <select aria-label=${label}><option>${value}</option></select>${trail}
      <span class="drop">${arrow(DOWN)}</span></div>`;
  }

  private toolbars() {
    return html`
      <div class="bar">
        <div class="section grow">${tools("new open save | print preview | cut copy paste painter | undo redo | pan zoomdyn zoomprev | props")}</div>
        <div class="section slim">${tools("refresh")}</div>
        <div class="section slim">${tools("palette")}<button class="more" aria-label="More">»</button></div>
      </div>
      <div class="bar">
        <div class="section to-views">${tools("dimAligned dimLinear dimBase dimCont dimRot | center diameter radius | angle arcLen jog | leader tol | dimEdit dimEditX dimSpace | dimStyle")}</div>
        <div class="section last">${tools("ray | cubeTop cubeBottom cubeLeft cubeRight cubeFront cubeBack | zoomprev")}</div>
      </div>
      <div class="bar">
        <div class="section to-format">${tools("layerMgr")}
          ${this.combo("layer-combo", "Active layer", "0", ["bulb", "sun", "lock", "ring"].map((n) => html`<ds-icon name=${n}></ds-icon>`))}
        </div>
        <div class="section last">
          ${this.combo("prop-combo", "Line color", "ByLayer", html`<ds-icon name="ring"></ds-icon>`)}
          <span class="sep"></span>
          ${this.combo("prop-combo", "Line style", "ByLayer", nothing, html`<span class="right-text">Solid line</span>`)}
          <span class="sep"></span>
          ${this.combo("prop-combo", "Line weight", "ByLayer", html`<span class="rule"></span>`)}
        </div>
      </div>
      <div class="bar">
        <div class="section slim">${tools("disc plate | fold | meshBox meshDot meshTilt tube")}</div>
        <div class="section slim">${tools("sheet1 sheet2 sheet3")}</div>
        <div class="section">${tools("layGrey layGreen | layFreeze layThaw | layLock layUnlock | layIso layAll | check layWalk layCheck | layDel layPrev")}</div>
        <div class="section">${tools("zoomX zoomdyn zoomprev zoomWin zoomMinus zoomCen | zoomPlus zoomMinus | zoomDoc zoomFit")}</div>
        <div class="section last">${tools("blockGold blockA blockB blockC blockSave blockTab")}</div>
      </div>`;
  }

  private references() {
    return html`<section class="dock">
      <div class="dock-head"><h2>References</h2>${dockButtons}</div>
      <div class="frame">
        <div class="view">
          <table class="files">
            <thead><tr><th class="file">ced Files</th><th>Status</th></tr></thead>
            <tbody><tr><td><div class="cut">NAME_0</div></td><td></td></tr></tbody>
          </table>
          <div class="group"></div>
          <div class="legend">mation</div>
          <div class="row r-name"><label for="rname"></label><input class="blue" id="rname" aria-label="Name" readonly /></div>
          <div class="row r-colon">:</div>
          <div class="row r-type"><label for="rtype">ce type:</label><div class="combo"><select id="rtype"></select><span class="drop">${arrow(DOWN)}</span></div></div>
          <div class="row r-mod">dified:</div>
          <div class="row r-label"><label for="rpath">h path:</label></div>
          <div class="row r-path"><input class="blue" id="rpath" readonly /><button class="browse" aria-label="Browse">...</button></div>
          <div class="row r-save"><label for="rsaved">path:</label></div>
          <div class="row"><input class="blue" id="rsaved" readonly /></div>
          <div class="tail"></div>
        </div>
        <div class="vbar">${arrow(UP)}<span class="gap"></span><span class="vthumb"></span>${arrow(DOWN)}</div>
        <div class="hbar">${arrow(LEFT)}<span class="hthumb"></span>${arrow(RIGHT)}</div>
      </div>
      <div class="dtabs"><button>Home</button><button class="on">References</button></div>
    </section>`;
  }

  private canvas() {
    return html`<div class="drawing">
      <svg class="canvas" role="img" aria-label="Drawing area">
        <g fill="none" stroke="#e0e0e0">
          <circle cx="187.5" cy="59.5" r="40.3"></circle>
          <circle cx="278.5" cy="192" r="40.3"></circle>
          <path d="M36 237V208M33 213L36 207L39 213M40 241H69M64 238L70 241L64 244M33.5 238.5H38.5V243.5H33.5Z"></path>
        </g>
        <text x="33" y="206">Y</text><text x="71" y="244">X</text>
        <rect x="208" y="0" width="1" height="100%" fill="#14d214"></rect>
        <rect x="0" y="93" width="100%" height="1" fill="#e01818"></rect>
        <circle cx="208.5" cy="93" r="3.5" fill="none" stroke="#a8a820"></circle>
        <path d="M204 96L212 90" stroke="#d86a1a"></path>
        <path d="M214 97.5H222" stroke="#c8c828" stroke-width="2" stroke-dasharray="2 1"></path>
        <path d="M201.5 86.5H215.5V100.5H201.5Z" fill="none" stroke="#fff" stroke-width="1.4"></path>
      </svg>
      <div class="sheets">
        ${["Model", "Sheet1", "Sheet2"].map((t, i) => html`<button class=${classMap({ sheet: true, on: i === 0 })}>
          <svg viewBox="0 0 38 11" preserveAspectRatio="none" aria-hidden="true"><path d="M0 .5L4 9Q5 10.5 7 10.5H31Q33 10.5 34 9L38 .5"></path></svg><span>${t}</span></button>`)}
      </div>
    </div>`;
  }

  private command() {
    return html`<section class="command">
      <div class="dock-head"><h2>Command window</h2>${dockButtons}</div>
      <div class="history">
        <div class="log">
          <p class="old">_CIRCLE</p>
          <p>Options: <a href="#3p"><u>3P</u>oint</a>, <a href="#2p"><u>2P</u>oint</a>, <a href="#ttr"><u>T</u>tr</a>, <a href="#ttt"><u>TTT</u></a>, <a href="#exit"><i>Enter to exit</i></a> or</p>
          <p><b>Specify center point»</b> _TTR</p>
        </div>
        <div class="vbar">${arrow(UP)}<span class="gap"></span><span class="vthumb"></span>${arrow(DOWN)}</div>
      </div>
      <div class="prompt"><label for="cmd">Specify first tangency»</label><input id="cmd" /></div>
    </section>`;
  }

  private statusBar() {
    const btn = (t: string, on = false) => html`<button class=${classMap({ on })} aria-pressed=${on}>${t}</button>`;
    return html`<footer class="status">
      <span class="msg">Grid too dense to display</span>
      <div class="toggles">${btn("Snap")}${btn("Grid", true)}${btn("Ortho")}</div>
      <div class="toggles">${btn("Polar")}${btn("ESnap", true)}${btn("ETrack", true)}</div>
      <span>(1744.1925,170.6184,0.0000)</span>
    </footer>`;
  }

  private taskbar() {
    return html`<div class="taskbar">
      <button class="task start" aria-label="Start"><svg viewBox="0 0 27 27">
        <circle cx="13.5" cy="13.5" r="12.5" fill="#285a94" stroke="#8fb6dc"></circle><path d="M3 10A12 12 0 0 1 24 10Q13 15 3 10Z" fill="#6f9cc4"></path>
        <path d="M7 8Q10 6 13 8L12 13Q9 11 6 13Z" fill="#ee6a32"></path><path d="M14 8Q17 10 21 8L20 13Q16 15 13 13Z" fill="#9cc94a"></path>
        <path d="M6 14Q9 12 12 14L11 19Q8 17 5 19Z" fill="#4fa8e6"></path><path d="M13 14Q16 16 20 14L18 19Q15 21 12 19Z" fill="#fbcb3c"></path></svg></button>
      <button class="task run" aria-label="Internet Explorer"><svg viewBox="0 0 24 24">
        <path d="M19 16.5Q17 20 12.5 20Q6 19.5 6 13Q6.5 6.5 12.5 6.5Q19 6.5 19 13.5H8" fill="none" stroke="#5cc2f2" stroke-width="3.4"></path>
        <path d="M3 20Q0 16 8 9Q16 1.5 21 3Q23 4 21 8" fill="none" stroke="#f3cf56" stroke-width="1.8"></path></svg></button>
      <button class="task" aria-label="Explorer"><svg viewBox="0 0 24 24">
        <path d="M1 4H8L9 6H21V20H1Z" fill="#e3c267"></path><path d="M4 2H17V10H4Z" fill="#f8f1cc"></path><path d="M1 7H23V20H1Z" fill="#f5e19a"></path>
        <path d="M1 10H23" stroke="#dfc06a"></path><path d="M5 22V15Q5 13 7 13H17Q19 13 19 15V22H16V17H8V22Z" fill="#8cc4e8" stroke="#5a98c4" stroke-width=".6"></path></svg></button>
      <button class="task run" aria-label="Chrome"><svg viewBox="0 0 24 24">
        <circle cx="12" cy="12" r="10" fill="#e8453c"></circle>
        <path d="M12 12L3.3 7A10 10 0 0 0 12 22L16.5 14Z" fill="#35a650"></path><path d="M12 22A10 10 0 0 0 20.7 7H12L16.5 14.5Z" fill="#fcc934"></path>
        <circle cx="12" cy="12" r="4.8" fill="#fff"></circle><circle cx="12" cy="12" r="3.7" fill="#4285f4"></circle></svg></button>
      <button class="task run front" aria-label="DraftSight"><svg viewBox="0 0 24 24">
        <path d="M4 4V20L9 20Q14 15 9 9Z" fill="#4fb04a"></path><path d="M6 9V17Q10 14 6 9Z" fill="#cfe0ea"></path><path d="M14 3L22 21L17 18L13 21L11 12Z" fill="#8fc9a0"></path><path d="M14 9L17 16H13Z" fill="#5d8fae"></path></svg></button>
      <button class="task run" aria-label="Outlook"><svg viewBox="0 0 24 24">
        <path d="M11 6H23V18H11Z" fill="#fff"></path><path d="M14 11L17 14L22 8" fill="none" stroke="#1673c4" stroke-width="2"></path>
        <path d="M2 4L14 2V22L2 20Z" fill="#1173c7"></path><circle cx="8" cy="12" r="3" fill="none" stroke="#fff" stroke-width="2"></circle></svg></button>
      <div class="tray">
        <svg viewBox="0 0 12 12"><path d="M3 8L6 5L9 8Z" fill="#fff"></path></svg>
        <svg viewBox="0 0 12 12"><path d="M3.5 2.5H11V8H3.5ZM5 10.5H10M7.5 8V10M1.5 1V10.5H4" fill="none" stroke="#fff" stroke-width="1.3"></path></svg>
        <svg viewBox="0 0 12 12"><path d="M1 4.5H3L6 2V10L3 7.5H1Z" fill="#fff"></path><path d="M7.5 4.5Q8.5 6 7.5 7.5M9.5 3Q11.5 6 9.5 9" fill="none" stroke="#fff"></path></svg>
        <svg viewBox="0 0 12 12"><path d="M2.5 1V11.5" stroke="#fff" stroke-width="1.4"></path><path d="M3 2H7L8 3.5H11.5V7.5H7L6 6.5H3Z" fill="#fff"></path></svg>
        <div class="clock">16:22<br />09-03-2017</div>
      </div>
      <button class="peek" aria-label="Show desktop"></button>
    </div>`;
  }

  render() {
    const chevron = html`<svg viewBox="0 0 6 7" aria-hidden="true"><path d="M.5 .5L3 3L5.5 .5M.5 3.5L3 6L5.5 3.5"></path></svg>`;
    return html`
      ${this.titleBar()} ${this.menuBar()} ${this.toolbars()}
      <div class="middle">
        <div class="rail"><div class="spread">${tools("line iline polygon rect arc3 arc circle ellipse ellArc points spline hatch note cloud tableA tableB")}</div></div>
        <div class="rail">${tools("textStyle dimStyle lineStyle fillStyle")}</div>
        <div class="rail end">${tools("refDoc refBlock refDash refHand")}</div>
        <main class="main">
          <div class="upper">${this.references()}${this.canvas()}</div>
          ${this.command()}
        </main>
        <div class="rail end">${tools("ucs | ucsWorld ucsPrev | ucsFace ucsView | ucsOrigin ucsZ ucs3 | rotX rotY rotZ | ucsNamed | ucsApply")}</div>
        <div class="rail end edit">
          <div class="spread">${tools("erase move mirror copyEnt offset pattern rotate scale stretch fillet chamfer split splitP weld trim explode")}</div>
          <button class="chev" aria-label="More edit tools">${chevron}</button>
          <div class="rail-next">${tools("tableA")}<button class="chev" aria-label="More">${chevron}</button></div>
        </div>
      </div>
      <div class="lower">
        <div class="section order">${tools("front1 front2 front3 front4")}</div>
        <div class="section inquiry">${tools("tape tape2 listDoc coord")}</div>
        <div class="section last">${tools("refDoc refBlock aDoc saveA")}</div>
      </div>
      ${this.statusBar()} ${this.taskbar()}
    `;
  }
}
